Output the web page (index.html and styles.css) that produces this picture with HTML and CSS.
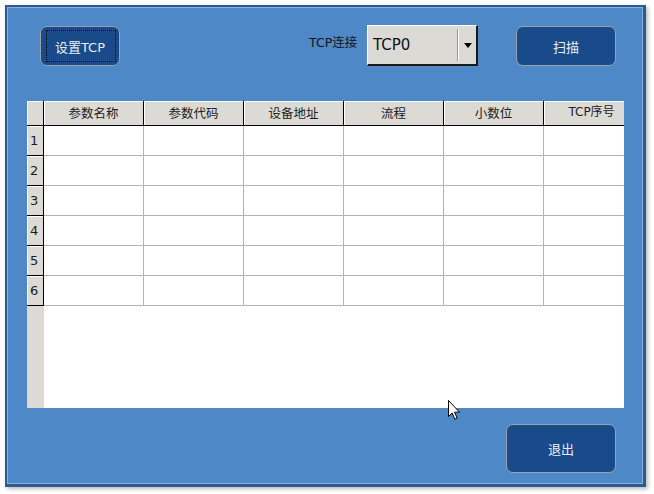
FILE: index.html
```html
<!DOCTYPE html>
<html lang="zh">
<head>
<meta charset="utf-8">
<title>TCP</title>
<link rel="stylesheet" href="styles.css">
</head>
<body>
<div class="window">
  <div class="toolbar">
    <button class="btn btn-set"><span class="focus">设置TCP</span></button>
    <span class="label">TCP连接</span>
    <div class="combo">
      <span class="combo-text">TCP0</span>
      <span class="combo-sep"></span>
      <span class="combo-arrow"></span>
    </div>
    <button class="btn btn-scan">扫描</button>
  </div>

  <div class="grid">
    <div class="row head">
      <div class="corner"></div>
      <div class="hcell">参数名称</div>
      <div class="hcell">参数代码</div>
      <div class="hcell">设备地址</div>
      <div class="hcell">流程</div>
      <div class="hcell">小数位</div>
      <div class="hcell">TCP序号</div>
    </div>
    <div class="row"><div class="rh">1</div><div class="cell"></div><div class="cell"></div><div class="cell"></div><div class="cell"></div><div class="cell"></div><div class="cell"></div></div>
    <div class="row"><div class="rh">2</div><div class="cell"></div><div class="cell"></div><div class="cell"></div><div class="cell"></div><div class="cell"></div><div class="cell"></div></div>
    <div class="row"><div class="rh">3</div><div class="cell"></div><div class="cell"></div><div class="cell"></div><div class="cell"></div><div class="cell"></div><div class="cell"></div></div>
    <div class="row"><div class="rh">4</div><div class="cell"></div><div class="cell"></div><div class="cell"></div><div class="cell"></div><div class="cell"></div><div class="cell"></div></div>
    <div class="row"><div class="rh">5</div><div class="cell"></div><div class="cell"></div><div class="cell"></div><div class="cell"></div><div class="cell"></div><div class="cell"></div></div>
    <div class="row"><div class="rh">6</div><div class="cell"></div><div class="cell"></div><div class="cell"></div><div class="cell"></div><div class="cell"></div><div class="cell"></div></div>
  </div>

  <div class="footer">
    <button class="btn btn-exit">退出</button>
  </div>

  <svg class="cursor" width="13" height="21" viewBox="0 0 13 21">
    <path d="M0.5 0.5 L0.5 16.5 L4.2 13 L6.8 19.2 L9.2 18.2 L6.6 12.2 L11.5 12.2 Z" fill="#fff" stroke="#000" stroke-width="1" stroke-linejoin="miter"/>
  </svg>
</div>
</body>
</html>
```

FILE: styles.css
```css
html, body {
  margin: 0;
  padding: 0;
  background: #ffffff;
}
body {
  padding: 5px;
  font-family: "DejaVu Sans", "Noto Sans CJK SC", sans-serif;
}
.window {
  position: relative;
  box-sizing: border-box;
  width: 641px;
  height: 482px;
  background: #4f88c6;
  border-style: solid;
  border-color: #2d5a8f;
  border-width: 2px 3px 3px 2px;
  box-shadow: inset 1px 1px 0 #86b0df, inset -1px -1px 0 #86b0df, 2px 2px 4px rgba(0,0,0,0.28);
  display: flex;
  flex-direction: column;
}
.toolbar {
  display: flex;
  align-items: flex-start;
  margin-top: 18px;
  padding-left: 33px;
  height: 41px;
}
.btn {
  box-sizing: border-box;
  background: #194a8a;
  border: 1px solid #9aa3ad;
  border-radius: 7px;
  color: #e9eef5;
  font-family: "DejaVu Sans", "Noto Sans CJK SC", sans-serif;
  font-size: 13px;
  padding: 0;
  position: relative;
}
.btn-set {
  width: 80px;
  height: 40px;
  margin-top: 1px;
}
.focus::after {
  content: "";
  position: absolute;
  left: 5px;
  right: 3px;
  top: 3px;
  bottom: 3px;
  border: 1px dotted #000;
}
.label {
  margin-left: 189px;
  margin-top: 10px;
  line-height: 16px;
  font-size: 12.5px;
  color: #151515;
  width: 50px;
}
.combo {
  box-sizing: border-box;
  margin-left: 8px;
  width: 111px;
  height: 41px;
  background: #dcdad5;
  border-style: solid;
  border-width: 1px 2px 2px 1px;
  border-color: #ffffff #1a1a1a #1a1a1a #ffffff;
  display: flex;
  align-items: center;
}
.combo-text {
  font-size: 15px;
  color: #111;
  padding-left: 5px;
  width: 84px;
}
.combo-sep {
  width: 1px;
  height: 32px;
  background: #ffffff;
  border-left: 1px solid #9a9893;
}
.combo-arrow {
  margin-left: 5px;
  width: 0;
  height: 0;
  border-left: 4px solid transparent;
  border-right: 4px solid transparent;
  border-top: 5px solid #000;
}
.btn-scan {
  margin-left: 38px;
  margin-top: 1px;
  width: 100px;
  height: 40px;
}
.grid {
  margin-top: 35px;
  margin-left: 20px;
  width: 597px;
  height: 307px;
  overflow: hidden;
  background: linear-gradient(to right, #dcdad5 17px, #ffffff 17px);
}
.row {
  display: grid;
  grid-template-columns: 17px repeat(6, 100px);
  grid-template-rows: 30px;
  height: 30px;
  overflow: hidden;
}
.row.head {
  grid-template-rows: 25px;
  height: 25px;
}
.corner, .hcell, .rh {
  box-sizing: border-box;
  background: #dcdad5;
  border-right: 1px solid #000;
  border-bottom: 1px solid #000;
  box-shadow: inset 1px 1px 0 #ffffff;
}
.hcell {
  font-family: "Noto Sans CJK SC", "DejaVu Sans", sans-serif;
  font-size: 12.5px;
  color: #202020;
  text-align: center;
  line-height: 23px;
}
.hcell:last-child {
  font-family: "DejaVu Sans", "Noto Sans CJK SC", sans-serif;
  font-size: 12px;
  padding-right: 4px;
}
.rh {
  font-size: 13px;
  color: #1a1a1a;
  padding-left: 3px;
  line-height: 29px;
}
.cell {
  box-sizing: border-box;
  background: #ffffff;
  border-right: 1px solid #b4b4b4;
  border-bottom: 1px solid #b4b4b4;
}
.footer {
  display: flex;
  justify-content: flex-end;
  padding-right: 27px;
  margin-top: 16px;
}
.btn-exit {
  width: 110px;
  height: 49px;
}
.cursor {
  position: absolute;
  left: 441px;
  top: 393px;
}
```
